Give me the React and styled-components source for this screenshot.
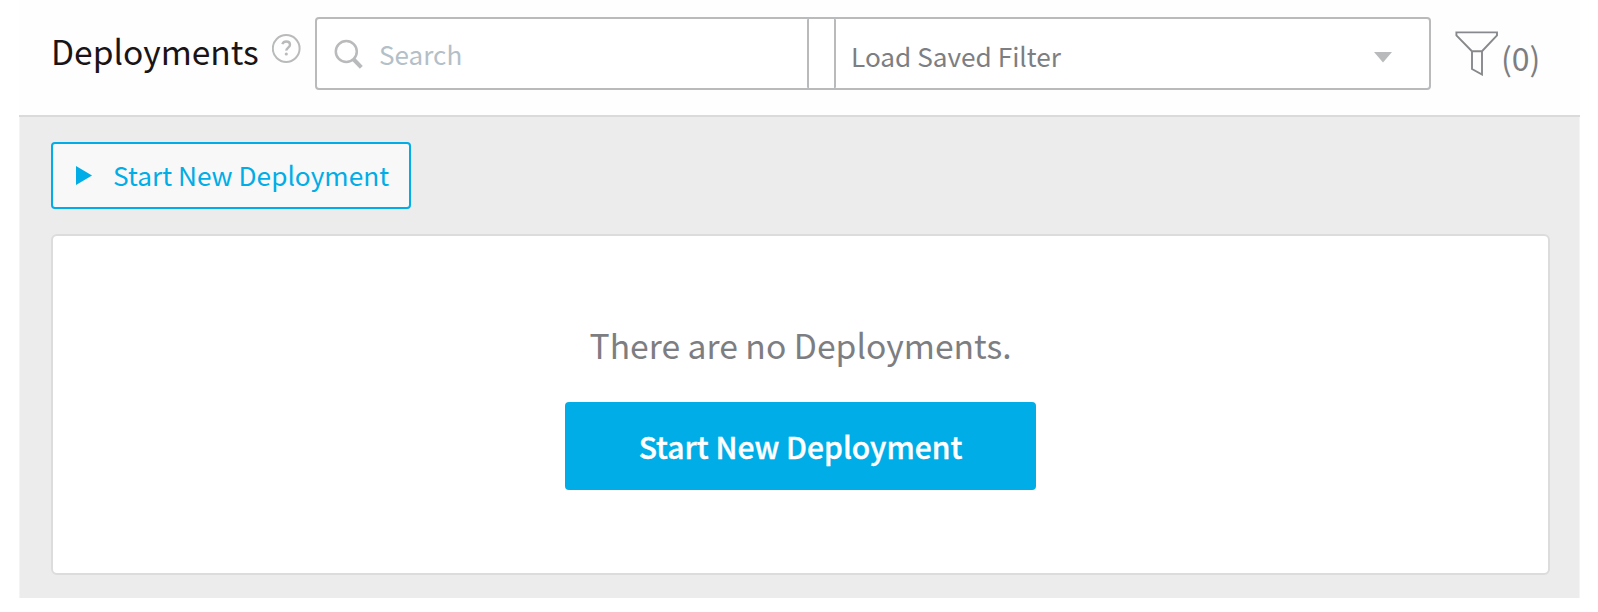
import React from "react";
import styled, { createGlobalStyle } from "styled-components";

const GlobalStyle = createGlobalStyle`
  *, *::before, *::after { box-sizing: border-box; }
  body {
    margin: 0;
    background: #fff;
    font-family: "Noto Sans CJK SC", "Source Sans Pro", sans-serif;
    color: #7d7e82;
  }
  button, input { font: inherit; letter-spacing: inherit; }
`;

const Page = styled.div`
  display: flex;
  flex-direction: column;
  width: 1561px;
  height: 598px;
  margin-left: 19px;
`;

const Header = styled.header`
  display: flex;
  align-items: flex-start;
  height: 117px;
  padding: 17px 0 0 32px;
  background: #fefefe;
  border-bottom: 2px solid #dadada;
`;

const Title = styled.h1`
  width: 221px;
  margin: 0;
  font-size: 33.55px;
  font-weight: 400;
  line-height: 40px;
  padding-top: 14px;
  color: #1a1416;
  white-space: nowrap;
`;

const HelpIcon = styled.svg`
  flex: none;
  width: 29px;
  height: 29px;
  margin: 17px 14px 0 0;
`;

const Filters = styled.div`
  display: flex;
  width: 1116px;
  height: 73px;
  border: 2px solid #b9babb;
  border-radius: 4px;
  background: #fff;
`;

const SearchField = styled.label`
  display: flex;
  align-items: center;
  gap: 16px;
  width: 490px;
  padding-left: 17px;
`;

const SearchInput = styled.input`
  width: 400px;
  height: 44px;
  padding: 0;
  border: 0;
  outline: 0;
  background: transparent;
  font-size: 26.1px;
  &::placeholder { color: #b4bfc8; opacity: 1; }
`;

const Spacer = styled.div`
  width: 29px;
  border: solid #b9babb;
  border-width: 0 2px;
  border-radius: 1px;
`;

const SavedFilter = styled.div`
  display: flex;
  flex: 1;
  align-items: center;
  justify-content: space-between;
  padding: 5px 37px 0 15px;
  font-size: 26.2px;
  line-height: 36px;

  svg { margin-top: 2px; }
`;

const FilterCount = styled.div`
  display: flex;
  margin-left: 24px;
  font-size: 32px;
  line-height: 40px;
`;

const FunnelIcon = styled.svg`
  width: 43px;
  height: 46px;
  margin: 13px 3px 0 0;
`;

const Count = styled.span`
  padding-top: 20px;
`;

const Content = styled.main`
  display: flex;
  flex: 1;
  flex-direction: column;
  align-items: flex-start;
  gap: 25px;
  padding: 25px 29px 23px 31px;
  background: #ececec;
  border: solid #f4f4f4;
  border-width: 0 1px;
`;

const OutlineButton = styled.button`
  display: flex;
  align-items: center;
  gap: 21px;
  width: 360px;
  height: 67px;
  padding: 0 0 0 23px;
  border: 2px solid #00ade6;
  border-radius: 4px;
  background: #f8f8f8;
  color: #00ade6;
  font-size: 26.25px;
  line-height: 36px;
  white-space: nowrap;
`;

const ButtonLabel = styled.span`
  padding-bottom: 2px;
`;

const Card = styled.section`
  display: flex;
  flex: 1;
  flex-direction: column;
  align-items: center;
  align-self: stretch;
  border: 2px solid #dcdcdc;
  border-radius: 6px;
  background: #fff;
`;

const EmptyMessage = styled.p`
  margin: 85px 0 33px;
  font-size: 33.65px;
  line-height: 48px;
  white-space: nowrap;
`;

const PrimaryButton = styled.button`
  width: 471px;
  height: 88px;
  padding: 0;
  border: 0;
  border-radius: 4px;
  background: #00ade6;
  color: #fff;
  font-size: 30px;
  font-weight: 500;
  -webkit-text-stroke: 0.4px #fff;
  white-space: nowrap;
`;

export default function App() {
  return (
    <>
      <GlobalStyle />
      <Page>
        <Header>
          <Title>Deployments</Title>
          <HelpIcon viewBox="0 0 29 29" fill="none" stroke="#b9babb">
            <circle cx="14.2" cy="14.5" r="13.4" strokeWidth="2" />
            <path d="M10.3 10.1c.7-1.7 2.1-2.6 3.9-2.6 2.3 0 3.8 1.3 3.8 3.2 0 2.8-3.8 3.1-3.6 6" strokeWidth="2.4" />
            <circle cx="14.3" cy="20" r="1.6" fill="#b9babb" stroke="none" />
          </HelpIcon>
          <Filters>
            <SearchField>
              <svg width="29" height="30" viewBox="0 0 29 30" fill="none" stroke="#b9babb">
                <circle cx="12.3" cy="12.5" r="10.5" strokeWidth="2.5" />
                <path d="M19.3 20l8 8.3" strokeWidth="4" />
              </svg>
              <SearchInput placeholder="Search" />
            </SearchField>
            <Spacer />
            <SavedFilter>
              Load Saved Filter
              <svg width="18" height="11" viewBox="0 0 18 11">
                <path d="M0 0h18l-9 10.5z" fill="#b9babb" />
              </svg>
            </SavedFilter>
          </Filters>
          <FilterCount>
            <FunnelIcon viewBox="0 0 43 46" fill="none" stroke="#88898c" strokeWidth="1.9">
              <path d="M1.4 2.4h40.6v3L27 21.2H16.9L1.4 5.4zM17 21v18l10 5.5V21" />
            </FunnelIcon>
            <Count>(0)</Count>
          </FilterCount>
        </Header>
        <Content>
          <OutlineButton>
            <svg width="16" height="19" viewBox="0 0 16 19">
              <path d="M0 0l16 9.5L0 19z" fill="#00ade6" />
            </svg>
            <ButtonLabel>Start New Deployment</ButtonLabel>
          </OutlineButton>
          <Card>
            <EmptyMessage>There are no Deployments.</EmptyMessage>
            <PrimaryButton>Start New Deployment</PrimaryButton>
          </Card>
        </Content>
      </Page>
    </>
  );
}
